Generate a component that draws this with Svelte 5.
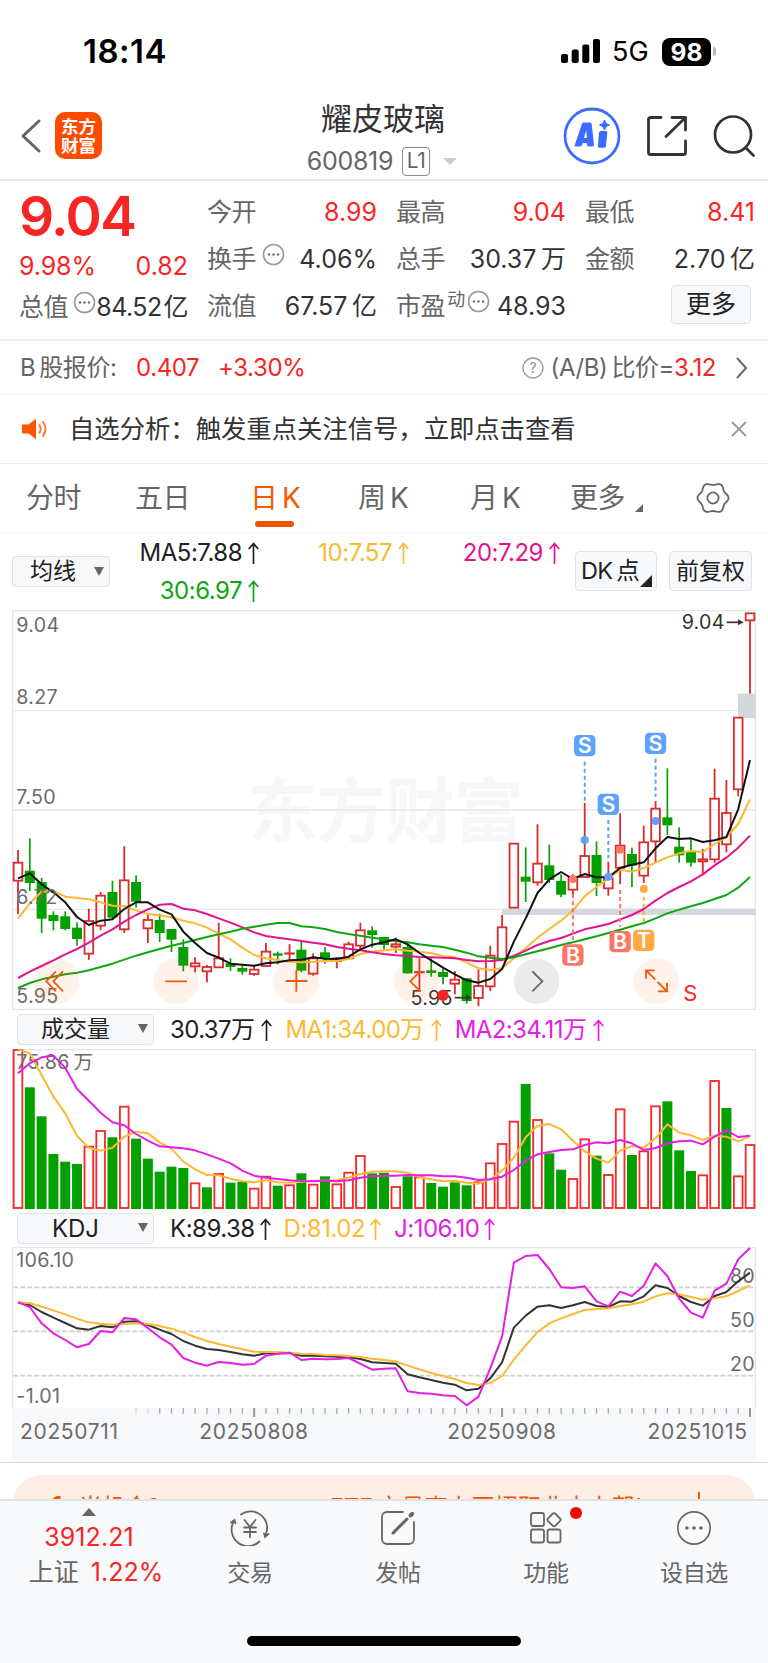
<!--
  StockDetail — quote header, daily K chart with MA overlay, volume and
  KDJ panels, plus the bottom bar.

  The three charts share one unit system: 3 chart units = 1 css pixel,
  so series values below are y positions in those units.
-->
<script lang="ts">
  type Candle = [string, number, number, number, number];

  const STEP = 35.42;
  const X0 = 54;
  const cx = (i: number) => X0 + i * STEP;

  // [direction, high, body top, body bottom, low]
  const candles: Candle[] = [
    ['r', 735, 773, 827, 927], ['g', 700, 797, 834, 858], ['g', 819, 831, 941, 984], ['g', 919, 930, 948, 976],
    ['g', 919, 934, 972, 976], ['g', 952, 968, 1002, 1022], ['r', 911, 948, 1046, 1064], ['r', 861, 872, 962, 976],
    ['g', 827, 861, 938, 942], ['r', 724, 826, 973, 984], ['g', 811, 831, 890, 908], ['r', 930, 945, 970, 1014],
    ['g', 926, 945, 984, 1011], ['g', 972, 972, 1004, 1041], ['g', 1003, 1026, 1082, 1099], ['r', 1057, 1075, 1084, 1102],
    ['r', 1079, 1086, 1099, 1132], ['r', 953, 1060, 1087, 1089], ['g', 1060, 1075, 1086, 1098], ['g', 1080, 1089, 1100, 1109],
    ['r', 1082, 1094, 1107, 1112], ['r', 1014, 1040, 1083, 1085], ['g', 1040, 1045, 1052, 1078], ['r', 1018, 1045, 1046, 1064],
    ['g', 1010, 1034, 1097, 1102], ['r', 1045, 1060, 1106, 1112], ['g', 1026, 1042, 1062, 1076], ['r', 1056, 1060, 1068, 1090],
    ['r', 1010, 1018, 1060, 1062], ['r', 953, 976, 1022, 1035], ['g', 964, 976, 990, 1028], ['g', 995, 996, 1020, 1033],
    ['r', 998, 1018, 1025, 1045], ['g', 1010, 1026, 1105, 1106], ['r', 1060, 1101, 1102, 1160], ['g', 1060, 1096, 1104, 1115],
    ['g', 1087, 1101, 1116, 1138], ['r', 1098, 1124, 1136, 1168], ['g', 1120, 1120, 1188, 1196], ['r', 1093, 1143, 1179, 1204],
    ['r', 1022, 1052, 1144, 1158], ['r', 930, 967, 1063, 1066], ['r', 715, 716, 908, 908], ['g', 727, 815, 830, 891],
    ['r', 658, 776, 832, 842], ['g', 719, 781, 825, 834], ['g', 808, 828, 869, 876], ['r', 808, 818, 854, 878],
    ['r', 594, 753, 816, 818], ['g', 709, 750, 834, 873], ['r', 770, 820, 850, 872], ['r', 625, 722, 788, 838],
    ['g', 728, 747, 782, 846], ['r', 662, 712, 812, 834], ['r', 588, 611, 709, 771], ['g', 490, 637, 661, 690],
    ['g', 667, 725, 751, 773], ['g', 703, 740, 773, 785], ['r', 732, 763, 769, 806], ['r', 491, 581, 763, 773],
    ['r', 525, 624, 718, 742], ['r', 338, 338, 553, 574], ['r', 25, 25, 46, 266]
  ];

  const priceLines = [
    { color: '#fdb834', ys: [941,895,860,858,875,879,883,892,902,903,916,927,931,937,947,955,968,986,1003,1028,1050,1060,1065,1070,1072,1070,1068,1068,1062,1047,1040,1036,1033,1037,1040,1045,1053,1057,1072,1090,1095,1090,1060,1030,998,972,947,916,874,845,822,794,800,789,773,757,745,738,741,717,697,657,583] },
    { color: '#e5128e', ys: [1119,1100,1083,1066,1048,1032,1013,992,973,950,930,913,899,897,911,916,927,940,953,967,982,993,998,1003,1008,1013,1018,1026,1031,1036,1042,1047,1051,1053,1056,1057,1058,1060,1065,1069,1068,1065,1052,1037,1020,1008,999,986,973,965,957,943,930,912,887,864,846,829,808,781,758,728,692] },
    { color: '#11a511', ys: [1149,1134,1123,1115,1108,1103,1096,1086,1076,1064,1052,1042,1032,1022,1014,1005,996,988,980,971,965,959,954,954,964,967,972,981,987,992,998,1003,1008,1012,1018,1022,1026,1034,1043,1054,1058,1062,1057,1048,1039,1030,1020,1012,1003,994,984,974,964,954,940,925,914,904,894,882,870,848,816] },
    { color: '#111', ys: [820,805,838,862,892,936,960,947,943,912,892,892,914,928,980,1014,1044,1058,1076,1079,1082,1075,1072,1066,1064,1057,1061,1062,1055,1033,1019,1012,1003,1018,1044,1066,1088,1108,1126,1133,1122,1092,1010,940,864,823,801,822,807,817,817,789,779,772,730,696,702,700,711,706,696,613,465] }
  ];

  const volumes = ('r118 g232 g319 g432 g455 g462 r408 r361 g382 r288 g386 g446 g485 g470 g474 r518 g532 r490 g518 g516 ' +
    'r534 r498 g527 r524 g490 r522 g499 r521 r486 r436 g490 g488 r529 g499 r500 g519 g530 g517 g526 r515 ' +
    'r458 r400 r333 g222 r328 g430 g479 r505 r386 g437 r493 r296 g435 r422 r287 g274 g421 g483 r494 r211 ' +
    'g294 r497 r403').split(' ').map((v) => ({ up: v[0] === 'r', y: +v.slice(1) }));

  const volumeLines = [
    { color: '#fdb834', ys: [118,130,195,260,310,378,413,422,413,380,365,370,397,416,455,478,495,496,506,514,517,511,517,518,515,512,512,510,503,492,485,484,484,488,502,508,514,512,518,521,508,482,443,382,347,342,358,392,424,446,458,422,408,413,385,343,368,376,390,377,380,394,379] },
    { color: '#e31ee6', ys: [190,160,142,137,173,237,272,308,337,346,372,392,409,412,415,421,433,446,460,482,497,503,507,511,513,514,512,514,511,503,499,497,497,495,496,496,499,499,503,510,508,500,480,452,433,426,420,418,405,397,400,390,400,420,414,400,394,392,403,380,361,381,377] }
  ];

  const kdjLines = [
    { color: '#333', ys: [187,195,216,233,249,265,269,258,262,245,244,255,269,282,303,317,327,330,336,343,347,340,340,339,347,347,349,350,352,357,367,369,371,403,412,420,428,434,451,446,415,367,263,227,200,196,204,196,186,198,201,184,185,169,136,144,168,186,197,168,156,124,98] },
    { color: '#fdb834', ys: [187,190,200,211,223,236,247,251,254,252,250,252,258,266,278,291,303,312,320,328,335,336,336,338,341,342,345,346,348,351,356,360,364,377,388,399,408,417,429,435,429,408,359,316,276,250,235,222,210,207,205,198,193,185,169,160,163,171,179,175,169,153,136] },
    { color: '#e31ee6', ys: [187,201,250,280,300,322,312,273,277,234,238,264,292,314,354,368,377,366,369,374,372,347,341,338,360,356,358,357,354,371,389,386,385,454,459,461,466,468,496,470,385,290,68,48,45,87,142,144,139,184,199,155,168,137,70,108,176,218,233,152,131,58,24] }
  ];

  const points = (ys: number[]) => ys.map((y, i) => `${cx(i).toFixed(1)},${y}`).join(' ');

  const markers = [
    { i: 48, label: 'S', y: 422, dot: 705, from: 470, to: 590, color: '#5ca2ff' },
    { i: 50, label: 'S', y: 598, dot: 815, from: 645, to: 760, color: '#5ca2ff' },
    { i: 54, label: 'S', y: 415, dot: 648, from: 461, to: 575, color: '#5ca2ff' },
    { i: 47, label: 'B', y: 1050, dot: 822, from: 868, to: 1005, color: '#ff7566' },
    { i: 51, label: 'B', y: 1010, dot: 734, from: 855, to: 965, color: '#ff7566' },
    { i: 53, label: 'T', y: 1006, dot: 852, from: 875, to: 960, color: '#ffa940' }
  ];

  const ticks = Array.from({ length: 53 }, (_, k) => k + 10);
  const majorTicks = [20, 41, 62];

  const tabs = ['分时', '五日', '日\u2009K', '周\u2009K', '月\u2009K', '更多'];
  let activeTab = tabs[2];

  const gear = Array.from({ length: 73 }, (_, k) => {
    const a = (k * Math.PI) / 36;
    const r = 14.2 + 1.3 * Math.cos(6 * a);
    return `${(17 + r * Math.cos(a)).toFixed(2)},${(17 + r * Math.sin(a)).toFixed(2)}`;
  }).join(' ');
</script>

{#snippet dots()}
  <svg class="dots" width="23" height="23" viewBox="0 0 23 23">
    <circle cx="11.5" cy="11.5" r="10" fill="none" stroke="#999" stroke-width="1.6" />
    <circle cx="7" cy="11.5" r="1.3" fill="#777" /><circle cx="11.5" cy="11.5" r="1.3" fill="#777" /><circle cx="16" cy="11.5" r="1.3" fill="#777" />
  </svg>
{/snippet}

{#snippet up()}
  <svg class="up" width="11" height="22" viewBox="0 0 11 22" fill="none" stroke="currentColor" stroke-width="1.7">
    <path d="M5.5 22V1.500M.8 7l4.700-5.500L10.200 7" />
  </svg>
{/snippet}

<div class="page">
  <div class="status">
    <span class="time">18:14</span>
    <svg width="39" height="25" viewBox="0 0 39 25">
      <rect x="0" y="15" width="7" height="9" rx="2" /><rect x="10.7" y="10.5" width="7" height="13.5" rx="2" />
      <rect x="21.3" y="5.5" width="7" height="18.5" rx="2" /><rect x="32" y="0" width="7" height="24" rx="2" />
    </svg>
    <span class="net">5G</span>
    <span class="battery">98</span>
    <span class="nub"></span>
  </div>

  <header>
    <svg class="back" width="22" height="36" viewBox="0 0 22 36" fill="none" stroke="#666" stroke-width="3" stroke-linecap="round" stroke-linejoin="round"><path d="M19 3 3 18l16 15" /></svg>
    <div class="logo"><span>东方</span><span>财富</span></div>
    <div class="title">
      <h1>耀皮玻璃</h1>
      <div class="code">600819 <span class="l1">L1</span><i></i></div>
    </div>
    <div class="actions">
      <svg width="58" height="58" viewBox="0 0 58 58">
        <circle cx="29" cy="29" r="27" fill="none" stroke="#3c6bff" stroke-width="2.8" />
        <path fill="#3c6bff" fill-rule="evenodd" d="M20.500 15.500h6.500q1.500 0 1.700 1.500l2.300 20.500q.2 2-1.800 2h-3.400q-1.600 0-1.700-1.600l-.1-1.900h-4.200l-.7 2q-.5 1.500-2 1.500h-3.900q-2.100 0-1.300-2l7-20.500q.5-1.500 1.600-1.500zM23.300 23l-2.300 8h2.800z" />
        <path fill="#3c6bff" d="M37.500 24h5.200q1.800 0 1.600 1.800l-1.300 13.200q-.2 1.700-1.900 1.700h-4.600q-1.800 0-1.600-1.800l1.100-13.200q.2-1.700 1.500-1.700z" />
        <path d="m41.500 13 1.600 3.400 3.400 1.600-3.400 1.600-1.600 3.400-1.600-3.400-3.400-1.600 3.400-1.600z" fill="#3c6bff" stroke="#3c6bff" />
      </svg>
      <svg width="42" height="42" viewBox="0 0 42 42" fill="none" stroke="#333" stroke-width="2.8" stroke-linecap="round" stroke-linejoin="round">
        <path d="M15 2.500H4.500a2 2 0 0 0-2 2v33a2 2 0 0 0 2 2h33a2 2 0 0 0 2-2V26M26 2.500h13.500V15M39 3 20 21.500" />
      </svg>
      <svg width="42" height="42" viewBox="0 0 42 42" fill="none" stroke="#333" stroke-width="2.7" stroke-linecap="round">
        <circle cx="20" cy="19.500" r="18" /><path d="m33 33 7.500 7.500" />
      </svg>
    </div>
  </header>

  <section class="quote">
    <div class="left">
      <div class="price">9.04</div>
      <div class="cell red"><span>9.98%</span><b>0.82</b></div>
      <div class="cell"><span>总值</span>{@render dots()}<b class="tight">84.52&hairsp;亿</b></div>
    </div>
    <div class="grid">
      <div class="cell red"><span>今开</span><b>8.99</b></div>
      <div class="cell red"><span>最高</span><b>9.04</b></div>
      <div class="cell red"><span>最低</span><b>8.41</b></div>
      <div class="cell"><span>换手</span>{@render dots()}<b>4.06%</b></div>
      <div class="cell"><span>总手</span><b>30.37&thinsp;万</b></div>
      <div class="cell"><span>金额</span><b>2.70&thinsp;亿</b></div>
      <div class="cell"><span>流值</span><b>67.57&thinsp;亿</b></div>
      <div class="cell"><span>市盈</span><sup>动</sup>{@render dots()}<b>48.93</b></div>
      <div class="cell"><button class="more">更多</button></div>
    </div>
  </section>

  <section class="bshare">
    <span>B&thinsp;股报价:</span>
    <span class="red bp">0.407</span>
    <span class="red">+3.30%</span>
    <svg class="help" width="22" height="22" viewBox="0 0 22 22"><circle cx="11" cy="11" r="10" fill="none" stroke="#999" stroke-width="1.300" /><text x="11" y="16" text-anchor="middle" font-size="14" fill="#888">?</text></svg>
    <span>(A/B)&thinsp;比价=<span class="red">3.12</span></span>
    <svg class="go" width="12" height="22" viewBox="0 0 12 22" fill="none" stroke="#666" stroke-width="2"><path d="m1 1 9 10-9 10" /></svg>
  </section>

  <section class="alert">
    <svg width="26" height="22" viewBox="0 0 26 22">
      <path d="M1 6.500h5.500L14 .800v20.400l-7.500-5.700H1a1 1 0 0 1-1-1v-7a1 1 0 0 1 1-1z" fill="#ff5500" />
      <path d="M17.500 7q2.500 4 0 8M21 4q5 7 0 14" fill="none" stroke="#ff7a33" stroke-width="2" stroke-linecap="round" />
    </svg>
    <span>自选分析：触发重点关注信号，立即点击查看</span>
    <svg class="close" width="16" height="16" viewBox="0 0 16 16" stroke="#999" stroke-width="1.800"><path d="m1 1 14 14M15 1 1 15" /></svg>
  </section>

  <nav class="tabs">
    {#each tabs as tab}
      <button class:active={tab === activeTab} on:click={() => (activeTab = tab)}>{tab}</button>
    {/each}
    <svg class="gear" width="34" height="34" viewBox="0 0 34 34" fill="none" stroke="#666" stroke-width="1.800">
      <polygon points={gear} /><circle cx="17" cy="17" r="5.600" />
    </svg>
  </nav>

  <section class="ma">
    <button class="select avg">均线<i></i></button>
    <div class="values">
      <span>MA5:7.88{@render up()}</span>
      <span class="yellow">10:7.57{@render up()}</span>
      <span class="pink">20:7.29{@render up()}</span>
      <span class="green">30:6.97{@render up()}</span>
    </div>
    <button class="select dk">DK&thinsp;点<i></i></button>
    <button class="select fq">前复权</button>
  </section>

  <div class="charts">
    <svg width="744" height="400" viewBox="36 15 2232 1200">
      <text x="1155" y="696" text-anchor="middle" class="mark">东方财富</text>
      {#each [317, 615, 913] as y}
        <path d="M36 {y}H2268" stroke="#e6e9ef" stroke-width="4" />
      {/each}
      <path d="M38 1215V17H2266V1215" fill="none" stroke="#e3e5e8" stroke-width="4" />
      <path d="M36 1213H2268" stroke="#e3e5e8" stroke-width="4" />
      <rect x="2214" y="266" width="54" height="73" fill="#d4d8dd" />
      <rect x="1506" y="911" width="762" height="19" fill="#d4d8dd" />

      {#each candles as [dir, high, top, bottom, low], i}
        {#if dir === 'g'}
          <g fill="#04a000">
            <rect x={cx(i) - 2.5} y={high} width="5" height={low - high} />
            <rect x={cx(i) - 15} y={top} width="30" height={bottom - top} />
          </g>
        {:else}
          <g fill="none" stroke="#d92e30" stroke-width="5.500">
            <path d="M{cx(i)} {high}V{top}M{cx(i)} {bottom}V{low}" />
            <rect x={cx(i) - 13} y={top} width="26" height={bottom - top} />
          </g>
        {/if}
      {/each}

      {#each priceLines as line}
        <polyline points={points(line.ys)} fill="none" stroke={line.color} stroke-width="6" stroke-linejoin="round" />
      {/each}

      {#each markers as m}
        <path d="M{cx(m.i)} {m.from}V{m.to}" stroke={m.color} stroke-width="6" stroke-dasharray="12 9" />
        <circle cx={cx(m.i)} cy={m.dot} r="12" fill={m.color} />
        <rect x={cx(m.i) - 32} y={m.y - 32} width="64" height="64" rx="13" fill={m.color} />
        <text x={cx(m.i)} y={m.y + 23} text-anchor="middle" class="badge">{m.label}</text>
      {/each}

      <g class="scale">
        <text x="49" y="81">9.04</text><text x="49" y="297">8.27</text><text x="49" y="598">7.50</text>
        <text x="49" y="896">6.72</text><text x="49" y="1194">5.95</text>
        <text x="2174" y="73" text-anchor="end" class="ink">9.04</text>
        <text x="1358" y="1200" text-anchor="end" class="ink">5.95</text>
      </g>
      <g stroke="#333" fill="#333" stroke-width="5">
        <path d="M2180 52h34" /><path d="m2214 43 17 9-17 9z" stroke="none" />
        <path d="M1364 1178h34" /><path d="m1398 1169 17 9-17 9z" stroke="none" />
      </g>

      <g fill="#ff6a1a" fill-opacity=".09">
        <circle cx="169" cy="1129" r="68" /><circle cx="528" cy="1129" r="68" /><circle cx="889" cy="1129" r="68" />
        <circle cx="1250" cy="1129" r="68" /><circle cx="1969" cy="1129" r="68" />
      </g>
      <circle cx="1610" cy="1129" r="68" fill="#000" fill-opacity=".08" />
      <g fill="none" stroke="#f25a0c" stroke-width="5.500">
        <path d="m168 1099-29 30 29 30M189 1099l-29 30 29 30" />
        <path d="M496 1129h65M857 1128h65M889 1095v65" />
        <path d="m1261 1099-30 30 30 30" />
        <path d="M1938 1121v-25h26M1939 1097l27 27M2001 1133v26h-27M2000 1158l-27-27" />
      </g>
      <path d="m1597 1099 30 30-30 30" fill="none" stroke="#666" stroke-width="5.500" />
      <circle cx="1329" cy="1171" r="17" fill="#f52323" />
      <text x="2050" y="1187" class="sell">S</text>
    </svg>

    <div class="panel-head vol">
      <button class="select">成交量<i></i></button>
      <span>30.37万{@render up()}</span>
      <span class="yellow">MA1:34.00万{@render up()}</span>
      <span class="magenta">MA2:34.11万{@render up()}</span>
    </div>

    <svg width="744" height="160" viewBox="36 117 2232 480">
      <path d="M38 597V119H2266V597" fill="none" stroke="#e3e5e8" stroke-width="4" />
      {#each volumes as v, i}
        {#if v.up}
          <rect x={cx(i) - 13} y={v.y + 2} width="26" height={592 - v.y} fill="none" stroke="#f62a2a" stroke-width="5.500" />
        {:else}
          <rect x={cx(i) - 15} y={v.y} width="30" height={597 - v.y} fill="#04a000" />
        {/if}
      {/each}
      <g class="scale"><text x="49" y="176">75.86&thinsp;万</text></g>
      {#each volumeLines as line}
        <polyline points={points(line.ys)} fill="none" stroke={line.color} stroke-width="6" stroke-linejoin="round" />
      {/each}
    </svg>

    <div class="panel-head kdj">
      <button class="select">KDJ<i></i></button>
      <span>K:89.38{@render up()}</span>
      <span class="yellow">D:81.02{@render up()}</span>
      <span class="magenta">J:106.10{@render up()}</span>
    </div>

    <svg width="744" height="161" viewBox="36 21 2232 483">
      <path d="M38 504V23H2266V504" fill="none" stroke="#e3e5e8" stroke-width="4" />
      {#each [142, 274, 407] as y}
        <path d="M40 {y}H2264" stroke="#d0d0d0" stroke-width="5" stroke-dasharray="15 6" />
      {/each}
      <g class="scale">
        <text x="49" y="81">106.10</text><text x="49" y="489">-1.01</text>
        <text x="2265" y="128" text-anchor="end">80</text><text x="2265" y="261" text-anchor="end">50</text><text x="2265" y="394" text-anchor="end">20</text>
      </g>
      {#each kdjLines as line}
        <polyline points={points(line.ys)} fill="none" stroke={line.color} stroke-width="6" stroke-linejoin="round" />
      {/each}
    </svg>

    <svg class="axis" width="744" height="54" viewBox="36 504 2232 162">
      {#each ticks as i}
        {#if majorTicks.includes(i)}
          <path d="M{cx(i)} 504v27" stroke="#999" stroke-width="6" />
        {:else}
          <path d="M{cx(i)} 504v17" stroke={i < 12 ? '#ddd' : '#aaa'} stroke-width="4" />
        {/if}
      {/each}
      <text x="60" y="596">20250711</text>
      <text x="762" y="596" text-anchor="middle">20250808</text>
      <text x="1506" y="596" text-anchor="middle">20250908</text>
      <text x="2243" y="596" text-anchor="end">20251015</text>
    </svg>
  </div>

  <div class="promo">
    <div class="banner"><b>1</b><span>当机会?</span><span class="etf">ETF&thinsp;交易高上百招职业大上帮!</span><i></i></div>
  </div>

  <footer>
    <div class="index">
      <i></i>
      <span class="red">3912.21</span>
      <div>上证 <span class="red">1.22%</span></div>
    </div>
    <div class="item">
      <svg width="40" height="36" viewBox="0 0 40 36" fill="none" stroke="#666" stroke-width="1.800" stroke-linecap="round">
        <path d="M11 4.500A16.500 16.500 0 0 1 35 26M29.500 31.500A16.500 16.500 0 0 1 4 11M1 12.500l3.500-2.500 1 3.500M38.500 24l-3.500 3-1-3.500" />
        <path d="m14.500 10 5.500 7 5.500-7M20 17v10M14 17.500h12M14 22h12" />
      </svg>
      <span>交易</span>
    </div>
    <div class="item">
      <svg width="40" height="36" viewBox="0 0 40 36" fill="none" stroke="#666" stroke-width="1.800" stroke-linecap="round">
        <path d="M25 2H9a5 5 0 0 0-5 5v22a5 5 0 0 0 5 5h22a5 5 0 0 0 5-5V12" />
        <path d="M15.500 22.500 29 9" stroke-width="3" /><path d="m32.500 5.500 1.700-1.700" stroke-width="4" /><path d="m14.500 23.500 2-1" stroke-width="2" />
      </svg>
      <span>发帖</span>
    </div>
    <div class="item">
      <svg width="40" height="36" viewBox="0 0 40 36" fill="none" stroke="#666" stroke-width="1.800">
        <rect x="5" y="3" width="13" height="13" rx="2" /><rect x="5" y="19.500" width="13" height="13" rx="2" /><rect x="21.500" y="19.500" width="13" height="13" rx="2" />
        <rect x="22.800" y="4.500" width="10.400" height="10.400" rx="2" transform="rotate(45 28 9.700)" />
      </svg>
      <em></em>
      <span>功能</span>
    </div>
    <div class="item">
      <svg width="40" height="36" viewBox="0 0 40 36">
        <circle cx="20" cy="18" r="16.200" fill="none" stroke="#666" stroke-width="1.700" />
        <circle cx="13" cy="18" r="1.800" fill="#666" /><circle cx="20" cy="18" r="1.800" fill="#666" /><circle cx="27" cy="18" r="1.800" fill="#666" />
      </svg>
      <span>设自选</span>
    </div>
    <div class="home"></div>
  </footer>
</div>

<style>
  .page {
    width: 768px;
    height: 1663px;
    overflow: hidden;
    background: #fff;
    color: #333;
    font-family: Inter, "Noto Sans CJK SC", sans-serif;
    font-size: 25px;
    line-height: 1;
  }

  .page * { box-sizing: border-box; }
  svg { display: block; flex: none; }
  button { font: inherit; color: inherit; border: 0; background: none; padding: 0; white-space: nowrap; }
  i, em { font-style: normal; flex: none; }
  .red { color: #f82525; }
  .yellow { color: #fdb834; }
  .pink { color: #e5128e; }
  .green { color: #11a511; }
  .magenta { color: #e31ee6; }

  .status { display: flex; align-items: center; height: 92px; padding: 11px 0 0 83px; color: #000; }
  .time { width: 478px; font-size: 33px; font-weight: 600; letter-spacing: 0.5px; }
  .net { margin-left: 12px; width: 50px; font-size: 27px; }
  .battery {
    width: 49px; height: 28px; border-radius: 8px; background: #000; color: #fff;
    font-size: 24.5px; font-weight: 700; line-height: 28px; text-align: center;
  }
  .nub { width: 3px; height: 9px; margin-left: 2px; border-radius: 0 4px 4px 0; background: #bbb; }

  header { display: flex; height: 89px; padding-left: 20px; border-bottom: 2px solid #e9e9e9; }
  .back { margin-top: 26px; }
  .logo {
    display: flex; flex-direction: column; align-items: center; width: 47px; height: 47px; margin: 20px 0 0 13px;
    padding-top: 5px; border-radius: 10px; background: #ff4a00; color: #fff; font-size: 17.5px; font-weight: 700; line-height: 19px;
  }
  .title { width: 320px; margin-left: 121px; display: flex; flex-direction: column; align-items: center; }
  h1 { margin: 9px 0 0; font-size: 31px; font-weight: 400; line-height: 36px; }
  .code { display: flex; align-items: center; height: 36px; margin: 6px 0 0 -2px; color: #666; font-size: 25px; letter-spacing: -0.3px; }
  .l1 { margin-left: 9px; width: 28px; height: 29px; border: 1.5px solid #888; border-radius: 4px; font-size: 21px; line-height: 26px; text-align: center; }
  .code i { margin-left: 13px; border: 7px solid transparent; border-top-color: #ccc; border-bottom: 0; }
  .actions { display: flex; align-items: center; margin-left: 20px; gap: 25px; }

  .quote { display: flex; gap: 19px; height: 158px; padding-left: 19px; }
  .left { width: 169px; padding-top: 4px; }
  .price { height: 61px; color: #f82525; font-size: 55px; font-weight: 600; line-height: 62px; letter-spacing: -1.6px; }
  .left .cell { height: 41px; }
  .grid { display: grid; grid-template-columns: repeat(3, 170px); grid-template-rows: repeat(3, 47px); column-gap: 19px; padding-top: 8px; }
  .cell { position: relative; display: flex; align-items: center; white-space: nowrap; }
  .cell span { color: #666; letter-spacing: -0.4px; }
  .cell b { margin-left: auto; font-weight: 400; }
  .cell .tight { letter-spacing: -0.5px; }
  .cell.red b, .left .cell.red span { color: #f82525; }
  .left .cell.red span { letter-spacing: -0.1px; }
  .cell .dots { margin: 0 0 11px 6px; }
  .left .dots { margin-left: 5px; }
  .cell sup { font-size: 18px; line-height: 18px; color: #666; margin: 0 0 14px 2px; }
  .cell sup + .dots { margin-left: 2px; }
  .more { width: 80px; height: 39px; margin-left: 86px; margin-top: -4px; border: 1.5px solid #dfe2e8; border-radius: 4px; background: #f7f8fa; color: #222; }

  .bshare { display: flex; align-items: center; height: 56px; padding-left: 20px; border-top: 2px solid #eee; border-bottom: 1px solid #eee; color: #666; font-size: 24px; letter-spacing: -0.4px; white-space: nowrap; }
  .bshare > span:first-child { width: 116px; }
  .bp { width: 82px; }
  .help { margin-left: auto; margin-right: 7px; }
  .go { margin: 0 20px 0 20px; }

  .alert { display: flex; align-items: center; height: 69px; padding-left: 22px; border-bottom: 1px solid #eee; font-size: 25.4px; letter-spacing: -0.06px; }
  .alert span { margin-left: 21px; }
  .close { margin-left: auto; margin-right: 21px; }

  .tabs { display: grid; grid-template-columns: 109px 115px 108px 112px 100px 126px auto; align-items: center; height: 69px; padding-left: 26px; border-bottom: 1px solid #eee; color: #666; font-size: 28px; }
  .tabs button { position: relative; justify-self: start; height: 68px; letter-spacing: -0.5px; }
  .tabs .active { color: #f05a00; }
  .tabs .active::after { content: ""; position: absolute; left: 5px; bottom: 5px; width: 39px; height: 6px; border-radius: 3px; background: #ee5500; }
  .tabs button:nth-child(6)::after { content: ""; position: absolute; right: -18px; bottom: 20px; border: 4px solid #666; border-top-color: transparent; border-left-color: transparent; }

  .ma { display: flex; height: 77px; padding: 0 16px 0 12px; font-size: 24px; }
  .select { position: relative; display: block; border: 1.5px solid #dfe2e8; border-radius: 4px; background: #f7f8fa; color: #222; font-size: 23px; }
  .select i { position: absolute; right: 8px; top: 11px; border: 5px solid transparent; border-top: 9px solid #666; border-bottom: 0; }
  .avg { width: 98px; height: 31px; margin-top: 23px; padding-right: 16px; }
  .avg i { top: 10px; right: 5px; }
  .values { display: grid; grid-template-columns: 118px 150px 151px; grid-template-rows: 38px 37px; width: 434px; margin: 1px 0 0 31px; }
  .values span, .panel-head span { display: flex; align-items: center; white-space: nowrap; letter-spacing: -0.5px; }
  .values span { justify-content: flex-end; color: #222; }
  .values span.yellow { color: #fdb834; }
  .values span.pink { color: #e5128e; }
  .values span.green { color: #11a511; }
  .up { margin-left: 6px; }
  .dk { width: 82px; height: 40px; margin-top: 18px; padding-right: 12px; font-size: 23.5px; letter-spacing: -0.6px; }
  .select.dk i { top: auto; right: 4px; bottom: 3px; border: 6px solid #222; border-top-color: transparent; border-left-color: transparent; }
  .fq { width: 83px; height: 40px; margin: 18px 0 0 12px; }

  .charts { margin-left: 12px; width: 744px; }
  text { font-family: Inter, "Noto Sans CJK SC", sans-serif; }
  .scale { font-size: 59px; fill: #6b6b6b; letter-spacing: 0.8px; }
  .scale .ink { fill: #333; }
  .mark { font-size: 210px; font-weight: 700; fill: #f7f7f7; letter-spacing: -4px; }
  .badge { font-size: 64px; font-weight: 600; fill: #fff; }
  .sell { font-size: 66px; fill: #f82525; }
  .axis { background: #f7f8fa; font-size: 63px; letter-spacing: 2px; fill: #6b6b6b; }

  .panel-head { display: flex; align-items: center; height: 39px; padding-left: 5px; font-size: 24px; color: #222; }
  .panel-head .select { width: 137px; height: 31px; padding-right: 20px; }
  .panel-head .select i { top: 9px; right: 5px; }
  .panel-head span { margin-left: 13px; letter-spacing: -0.6px; }
  .panel-head .select + span { margin-left: 16px; }
  .panel-head .up { margin-left: 7px; }
  .kdj { height: 38px; padding-top: 1px; }
  .kdj .select { font-size: 24px; }
  .panel-head.kdj span { letter-spacing: -0.5px; }
  .panel-head.kdj .up { margin-left: 5px; }

  .promo { height: 37px; padding: 12px 12px 0 12px; border-top: 1.5px solid #d5d9df; overflow: hidden; }
  .banner { display: flex; height: 60px; padding: 19px 0 0 40px; border-radius: 30px; background: #feeee5; color: #ee5500; font-size: 23px; line-height: 26px; white-space: nowrap; }
  .banner b { width: 27px; line-height: 22px; }
  .etf { margin-left: 170px; letter-spacing: 0.4px; }
  .banner i { width: 2px; height: 24px; margin: -2px 56px 0 auto; background: #ee5500; }

  footer { position: relative; display: flex; height: 165px; border-top: 2px solid #dfe2e6; background: #f8f9fb; color: #666; font-size: 23px; }
  .index { display: flex; flex-direction: column; align-items: center; width: 176px; padding: 7px 0 0 16px; font-size: 25px; white-space: nowrap; }
  .index i { border: 7px solid transparent; border-bottom: 8px solid #666; border-top: 0; margin-left: -14px; }
  .index > span { height: 25px; margin: 9px 0 10px -14px; letter-spacing: 0.1px; }
  .index div .red { margin-left: 5px; }
  .item { position: relative; display: flex; flex-direction: column; align-items: center; width: 148px; padding-top: 9px; }
  .item span { margin-top: 14px; line-height: 26px; letter-spacing: -0.3px; }
  .item em { position: absolute; left: 98px; top: 6px; width: 12px; height: 12px; border-radius: 50%; background: #f00; }
  .home { position: absolute; left: 247px; top: 135px; width: 274px; height: 10px; border-radius: 5px; background: #000; }
</style>
